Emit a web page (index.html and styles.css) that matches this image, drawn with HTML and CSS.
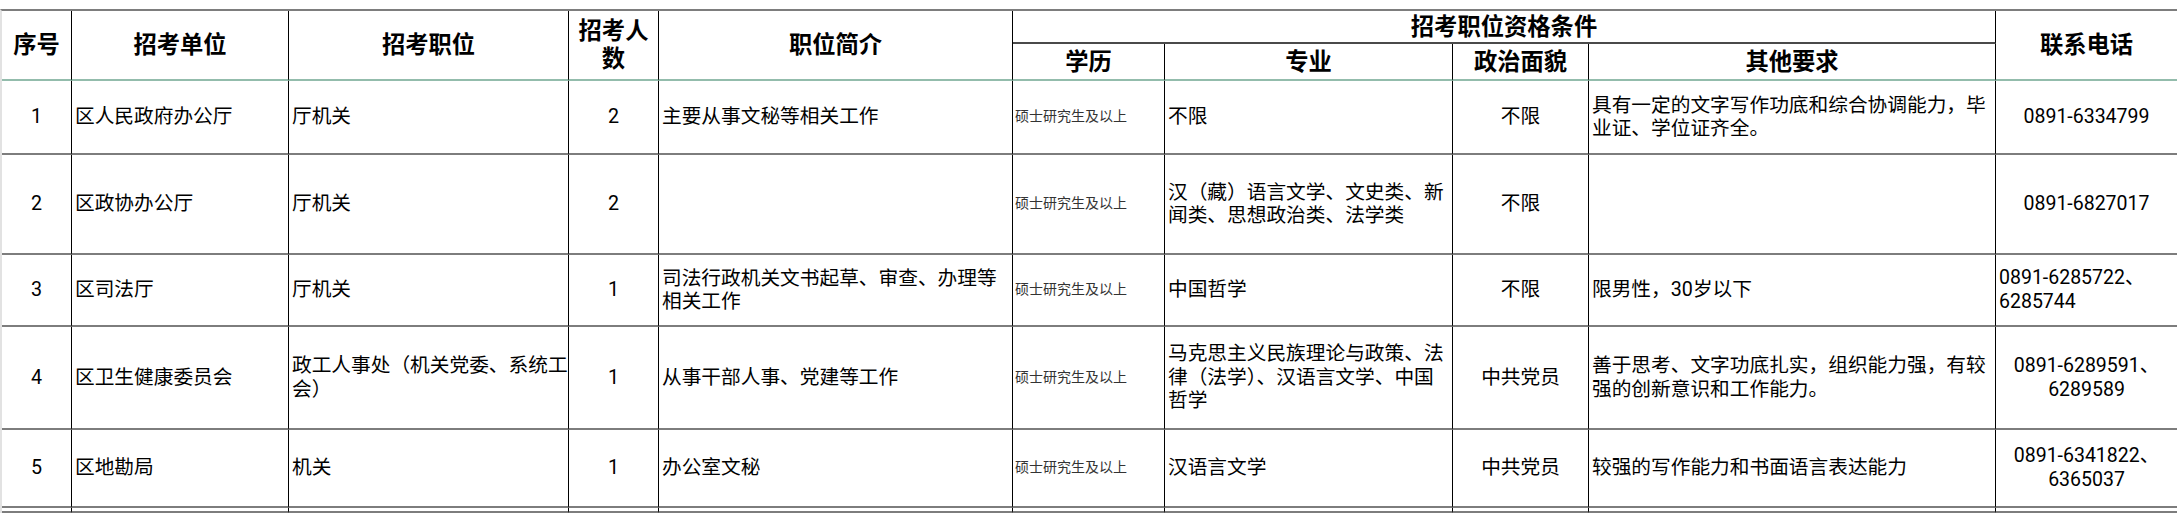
FILE: index.html
```html
<!DOCTYPE html>
<html lang="zh-CN">
<head>
<meta charset="utf-8">
<title>招考职位表</title>
<link rel="stylesheet" href="styles.css">
</head>
<body>
<div class="sheet">
  <div class="c h span2 center">序号</div>
  <div class="c h span2 center">招考单位</div>
  <div class="c h span2 center">招考职位</div>
  <div class="c h span2 center hl">招考人<br>数</div>
  <div class="c h span2 center">职位简介</div>
  <div class="c h group center">招考职位资格条件</div>
  <div class="c h span2 center">联系电话</div>
  <div class="c h sub center">学历</div>
  <div class="c h sub center">专业</div>
  <div class="c h sub center">政治面貌</div>
  <div class="c h sub center">其他要求</div>

  <div class="c center">1</div>
  <div class="c">区人民政府办公厅</div>
  <div class="c">厅机关</div>
  <div class="c center">2</div>
  <div class="c">主要从事文秘等相关工作</div>
  <div class="c edu">硕士研究生及以上</div>
  <div class="c">不限</div>
  <div class="c center">不限</div>
  <div class="c">具有一定的文字写作功底和综合协调能力，毕<br>业证、学位证齐全。</div>
  <div class="c center tel">0891-6334799</div>

  <div class="c center">2</div>
  <div class="c">区政协办公厅</div>
  <div class="c">厅机关</div>
  <div class="c center">2</div>
  <div class="c"></div>
  <div class="c edu">硕士研究生及以上</div>
  <div class="c">汉（藏）语言文学、文史类、新<br>闻类、思想政治类、法学类</div>
  <div class="c center">不限</div>
  <div class="c"></div>
  <div class="c center tel">0891-6827017</div>

  <div class="c center">3</div>
  <div class="c">区司法厅</div>
  <div class="c">厅机关</div>
  <div class="c center">1</div>
  <div class="c">司法行政机关文书起草、审查、办理等<br>相关工作</div>
  <div class="c edu">硕士研究生及以上</div>
  <div class="c">中国哲学</div>
  <div class="c center">不限</div>
  <div class="c">限男性，30岁以下</div>
  <div class="c tel">0891-6285722、<br>6285744</div>

  <div class="c center">4</div>
  <div class="c">区卫生健康委员会</div>
  <div class="c">政工人事处（机关党委、系统工<br>会）</div>
  <div class="c center">1</div>
  <div class="c">从事干部人事、党建等工作</div>
  <div class="c edu">硕士研究生及以上</div>
  <div class="c">马克思主义民族理论与政策、法<br>律（法学）、汉语言文学、中国<br>哲学</div>
  <div class="c center">中共党员</div>
  <div class="c">善于思考、文字功底扎实，组织能力强，有较<br>强的创新意识和工作能力。</div>
  <div class="c center tel">0891-6289591、<br>6289589</div>

  <div class="c center">5</div>
  <div class="c">区地勘局</div>
  <div class="c">机关</div>
  <div class="c center">1</div>
  <div class="c">办公室文秘</div>
  <div class="c edu">硕士研究生及以上</div>
  <div class="c">汉语言文学</div>
  <div class="c center">中共党员</div>
  <div class="c">较强的写作能力和书面语言表达能力</div>
  <div class="c center tel">0891-6341822、<br>6365037</div>

  <div class="c"></div>
  <div class="c"></div>
  <div class="c"></div>
  <div class="c"></div>
  <div class="c"></div>
  <div class="c"></div>
  <div class="c"></div>
  <div class="c"></div>
  <div class="c"></div>
  <div class="c"></div>
</div>
</body>
</html>
```

FILE: styles.css
```css
html, body {
  margin: 0;
  padding: 0;
  background: #fff;
  overflow: hidden;
}

body {
  font-family: Roboto, "Noto Sans CJK SC", sans-serif;
  color: #000;
}

.sheet {
  margin-top: 9px;
  display: grid;
  grid-template-columns: 70px 217px 280px 90px 354px 152px 288px 136px 407px 182px;
  grid-template-rows: 33px 37px 74px 100px 72px 103px 78px 5px;
  border-top: 2px solid #7d7d7d;
  border-left: 2px solid #e2e2e2;
  width: max-content;
}

.c {
  box-sizing: border-box;
  display: flex;
  align-items: center;
  justify-content: flex-start;
  text-align: left;
  padding: 0 1px 0 3px;
  border-right: 1px solid #000;
  border-bottom: 2px solid #7d7d7d;
  font-size: 19.7px;
  line-height: 23.5px;
  white-space: nowrap;
  overflow: hidden;
}

.center {
  justify-content: center;
  text-align: center;
  padding: 0 2px;
}

.h {
  font-weight: 700;
  font-size: 23.3px;
  line-height: 28px;
  border-bottom-color: #93bcac;
}

.span2 {
  grid-row: span 2;
}

.group {
  grid-column: span 4;
  border-bottom: 2px solid #4a4a4a;
}

.edu {
  font-size: 14px;
  color: #333;
  padding-left: 2px;
}

.tel {
  font-size: 19.5px;
  line-height: 24px;
}
```
